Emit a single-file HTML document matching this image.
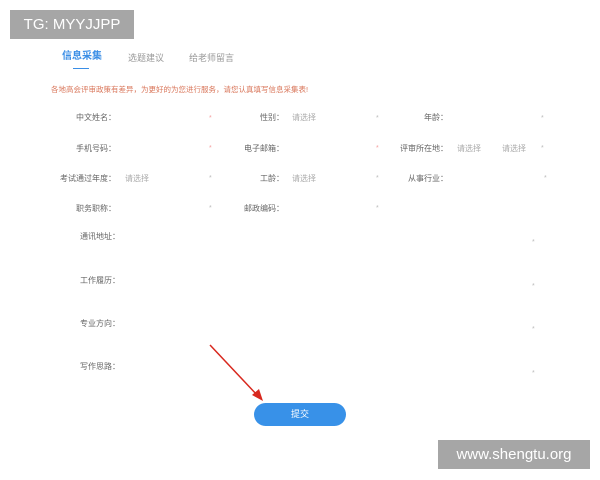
<!DOCTYPE html>
<html><head><meta charset="utf-8"><style>
body{margin:0;width:600px;height:480px;background:#fff;position:relative;overflow:hidden;font-family:"Liberation Sans","Noto Sans CJK SC",sans-serif;}
.a{position:absolute;white-space:nowrap;font-size:8px;color:#666;line-height:10px}
.r{text-align:right}
.p{color:#aaa}
.s{color:#bbb;font-size:7px}
.sr{color:#f5a0a0;font-size:7px}
</style></head><body>
<div class="a" style="left:10px;top:10px;width:124px;height:29px;background:#a6a6a6;color:#fff;font-size:15px;line-height:29px;text-align:center">TG: MYYJJPP</div>
<div class="a" style="left:62px;top:51px;font-size:10px;line-height:12px;color:#3a8ee6;font-weight:bold">信息采集</div>
<div style="position:absolute;left:73px;top:68px;width:16px;height:1px;background:#3a8ee6"></div>
<div class="a" style="left:128px;top:52px;font-size:9px;line-height:12px;color:#999">选题建议</div>
<div class="a" style="left:189px;top:52px;font-size:9px;line-height:12px;color:#999">给老师留言</div>
<div class="a" style="left:51px;top:85px;color:#d9765a;font-size:7.5px">各地高会评审政策有差异，为更好的为您进行服务，请您认真填写信息采集表!</div>

<div class="a r" style="left:40px;width:76px;top:113px">中文姓名：</div>
<div class="a r" style="left:40px;width:76px;top:144px">手机号码：</div>
<div class="a r" style="left:40px;width:76px;top:174px">考试通过年度：</div>
<div class="a p" style="left:125px;top:174px">请选择</div>
<div class="a r" style="left:40px;width:76px;top:204px">职务职称：</div>
<div class="a sr" style="left:209px;top:114px">*</div>
<div class="a sr" style="left:209px;top:144px">*</div>
<div class="a s" style="left:209px;top:174px">*</div>
<div class="a s" style="left:209px;top:204px">*</div>

<div class="a r" style="left:200px;width:84px;top:113px">性别：</div>
<div class="a p" style="left:292px;top:113px">请选择</div>
<div class="a r" style="left:200px;width:84px;top:144px">电子邮箱：</div>
<div class="a r" style="left:200px;width:84px;top:174px">工龄：</div>
<div class="a p" style="left:292px;top:174px">请选择</div>
<div class="a r" style="left:200px;width:84px;top:204px">邮政编码：</div>
<div class="a s" style="left:376px;top:114px">*</div>
<div class="a sr" style="left:376px;top:144px">*</div>
<div class="a s" style="left:376px;top:174px">*</div>
<div class="a s" style="left:376px;top:204px">*</div>

<div class="a r" style="left:370px;width:78px;top:113px">年龄：</div>
<div class="a r" style="left:370px;width:78px;top:144px">评审所在地：</div>
<div class="a p" style="left:457px;top:144px">请选择</div>
<div class="a p" style="left:502px;top:144px">请选择</div>
<div class="a r" style="left:370px;width:78px;top:174px">从事行业：</div>
<div class="a s" style="left:541px;top:114px">*</div>
<div class="a s" style="left:541px;top:144px">*</div>
<div class="a s" style="left:544px;top:174px">*</div>

<div class="a" style="left:80px;top:232px">通讯地址：</div>
<div class="a" style="left:80px;top:276px">工作履历：</div>
<div class="a" style="left:80px;top:319px">专业方向：</div>
<div class="a" style="left:80px;top:362px">写作思路：</div>
<div class="a s" style="left:532px;top:238px">*</div>
<div class="a s" style="left:532px;top:282px">*</div>
<div class="a s" style="left:532px;top:325px">*</div>
<div class="a s" style="left:532px;top:369px">*</div>

<svg style="position:absolute;left:0;top:0" width="600" height="480">
<line x1="210" y1="345" x2="258" y2="396" stroke="#d8281e" stroke-width="1.5"/>
<polygon points="263,401 252,395 259,389" fill="#d8281e"/>
</svg>
<div class="a" style="left:254px;top:403px;width:92px;height:23px;border-radius:12px;background:#3891e8;color:#fff;font-size:9px;line-height:23px;text-align:center">提交</div>
<div class="a" style="left:438px;top:440px;width:152px;height:29px;background:#a6a6a6;color:#fff;font-size:15px;line-height:29px;text-align:center">www.shengtu.org</div>
</body></html>
